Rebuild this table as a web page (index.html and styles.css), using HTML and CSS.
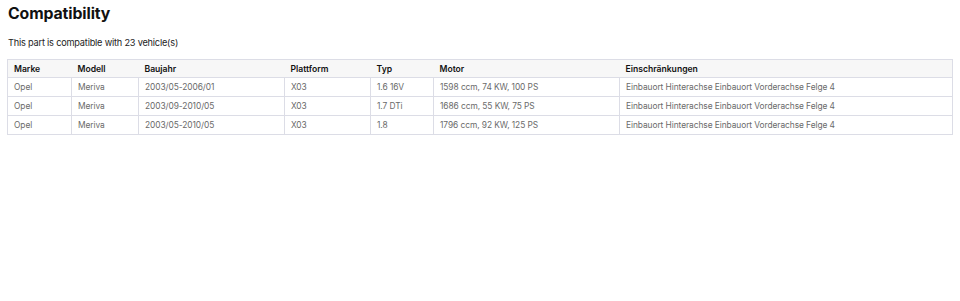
FILE: index.html
```html
<!DOCTYPE html>
<html>
<head>
<meta charset="utf-8">
<link rel="stylesheet" href="styles.css">
</head>
<body>
<h2 class="title">Compatibility</h2>
<p class="sub">This part is compatible with 23 vehicle(s)</p>
<table class="compat">
<colgroup>
<col class="c1"><col class="c2"><col class="c3"><col class="c4"><col class="c5"><col class="c6"><col class="c7">
</colgroup>
<thead>
<tr><th>Marke</th><th>Modell</th><th>Baujahr</th><th>Plattform</th><th>Typ</th><th>Motor</th><th>Einschränkungen</th></tr>
</thead>
<tbody>
<tr><td>Opel</td><td>Meriva</td><td>2003/05-2006/01</td><td>X03</td><td>1.6 16V</td><td>1598 ccm, 74 KW, 100 PS</td><td>Einbauort Hinterachse Einbauort Vorderachse Felge 4</td></tr>
<tr><td>Opel</td><td>Meriva</td><td>2003/09-2010/05</td><td>X03</td><td>1.7 DTi</td><td>1686 ccm, 55 KW, 75 PS</td><td>Einbauort Hinterachse Einbauort Vorderachse Felge 4</td></tr>
<tr><td>Opel</td><td>Meriva</td><td>2003/05-2010/05</td><td>X03</td><td>1.8</td><td>1796 ccm, 92 KW, 125 PS</td><td>Einbauort Hinterachse Einbauort Vorderachse Felge 4</td></tr>
</tbody>
</table>
</body>
</html>
```
FILE: styles.css
```css
html, body {
  margin: 0;
  padding: 0;
  background: #fff;
}
body {
  font-family: Inter, "Open Sans", "Liberation Sans", sans-serif;
  color: #111;
  padding: 3px 7px 0 7px;
}
.title {
  margin: 0 0 0 1px;
  font-size: 15.8px;
  font-weight: 700;
  line-height: 22px;
  letter-spacing: -0.1px;
}
.sub {
  margin: 12px 0 0 1px;
  font-size: 9.2px;
  line-height: 12px;
  letter-spacing: -0.2px;
  color: #222;
}
.compat {
  margin-top: 10px;
  width: 946px;
  border-collapse: collapse;
  table-layout: fixed;
  border: 1px solid #dcdde6;
}
.c1 { width: 64px; }
.c2 { width: 67px; }
.c3 { width: 146px; }
.c4 { width: 86px; }
.c5 { width: 63px; }
.c6 { width: 186px; }
.c7 { width: auto; }
.compat th {
  background: #f7f7f7;
  font-size: 8.6px;
  font-weight: 600;
  text-align: left;
  color: #111;
  height: 17px;
  padding: 0 6px;
  border-bottom: 1px solid #dcdde6;
}
.compat td {
  font-size: 8.4px;
  letter-spacing: -0.07px;
  color: #6a6a6a;
  height: 18px;
  padding: 0 6px;
  border: 1px solid #dcdde6;
  white-space: nowrap;
}
```
